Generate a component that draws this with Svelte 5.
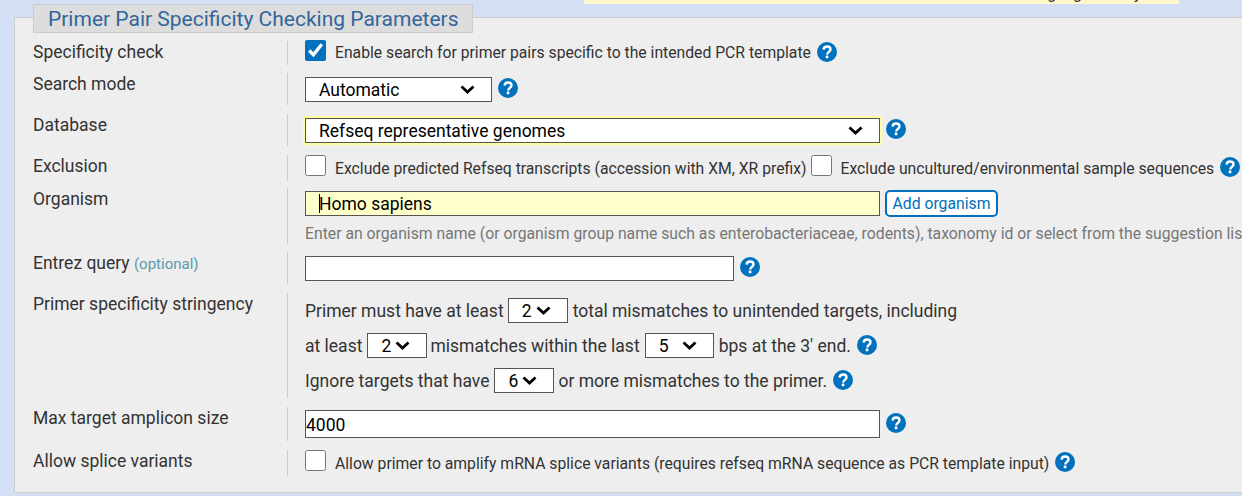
<script>
    let checkSpecificity = $state(true);
    let excludePredicted = $state(false);
    let excludeUncultured = $state(false);
    let allowSplice = $state(false);
    let searchMode = $state("Automatic");
    let database = $state("Refseq representative genomes");
    let organism = $state("Homo sapiens");
    let entrez = $state("");
    let maxSize = $state("4000");
    let totalMis = $state("2");
    let lastMis = $state("2");
    let lastBps = $state("5");
    let ignoreMis = $state("6");
</script>

{#snippet help()}
    <svg class="help" viewBox="0 0 20 20" aria-hidden="true">
        <circle cx="10" cy="10" r="10" fill="#0071bc" />
        <path d="M6.6 7.6c.1-2 1.5-3.1 3.5-3.1 2 0 3.4 1.1 3.4 2.8 0 1.3-.7 2-1.7 2.7-.9.6-1.4 1-1.4 2v.4" fill="none" stroke="#fff" stroke-width="2.4" />
        <rect x="8.7" y="13.5" width="2.7" height="2.7" rx=".4" fill="#fff" />
    </svg>
{/snippet}

<div class="page">
    <div class="notice"><span>Note: Parameter values that differ from the default are highlighted in yellow</span></div>

    <fieldset class="panel">
        <legend>Primer Pair Specificity Checking Parameters</legend>

        <div class="row r1">
            <div class="label">Specificity check</div>
            <div class="field">
                <label class="small"><input type="checkbox" bind:checked={checkSpecificity} /> Enable search for primer pairs specific to the intended PCR template</label>
                {@render help()}
            </div>
        </div>

        <div class="row r2">
            <div class="label">Search mode</div>
            <div class="field">
                <select class="mode" bind:value={searchMode}>
                    <option>Automatic</option>
                    <option>User guided</option>
                </select>
                {@render help()}
            </div>
        </div>

        <div class="row r3">
            <div class="label">Database</div>
            <div class="field">
                <select class="wide changed" bind:value={database}>
                    <option>Refseq representative genomes</option>
                    <option>Refseq mRNA</option>
                    <option>nr</option>
                </select>
                {@render help()}
            </div>
        </div>

        <div class="row r4">
            <div class="label">Exclusion</div>
            <div class="field nowrap">
                <label class="small"><input type="checkbox" bind:checked={excludePredicted} /> Exclude predicted Refseq transcripts (accession with XM, XR prefix)</label>
                <label class="small second"><input type="checkbox" bind:checked={excludeUncultured} /> Exclude uncultured/environmental sample sequences</label>
                {@render help()}
            </div>
        </div>

        <div class="row r5">
            <div class="label">Organism</div>
            <div class="field column">
                <div class="line org-line">
                    <div class="caret-wrap">
                        <input class="wide text org" bind:value={organism} />
                        <span class="caret"></span>
                    </div>
                    <button class="add">Add organism</button>
                </div>
                <div class="hint">Enter an organism name (or organism group name such as enterobacteriaceae, rodents), taxonomy id or select from the suggestion list as you type.</div>
            </div>
        </div>

        <div class="row r6">
            <div class="label">Entrez query <span class="opt">(optional)</span></div>
            <div class="field">
                <input class="text entrez" bind:value={entrez} />
                {@render help()}
            </div>
        </div>

        <div class="row r7">
            <div class="label">Primer specificity stringency</div>
            <div class="field column tight">
                <div class="line sentence">
                    Primer must have at least
                    <select class="num first" bind:value={totalMis}><option>1</option><option>2</option><option>3</option></select>
                    total mismatches to unintended targets, including
                </div>
                <div class="line sentence">
                    at least
                    <select class="num nudge" bind:value={lastMis}><option>1</option><option>2</option><option>3</option></select>
                    mismatches within the last
                    <select class="num bps" bind:value={lastBps}><option>5</option><option>10</option></select>
                    bps at the 3' end.
                    {@render help()}
                </div>
                <div class="line sentence">
                    Ignore targets that have
                    <select class="num third" bind:value={ignoreMis}><option>6</option><option>7</option></select>
                    or more mismatches to the primer.
                    {@render help()}
                </div>
            </div>
        </div>

        <div class="row r8">
            <div class="label">Max target amplicon size</div>
            <div class="field">
                <input class="wide text size" bind:value={maxSize} />
                {@render help()}
            </div>
        </div>

        <div class="row r9">
            <div class="label">Allow splice variants</div>
            <div class="field">
                <label class="small"><input type="checkbox" bind:checked={allowSplice} /> Allow primer to amplify mRNA splice variants (requires refseq mRNA sequence as PCR template input)</label>
                {@render help()}
            </div>
        </div>
    </fieldset>
</div>

<style>
:global(body){
    margin:0;
    background:#d2dff5;
    overflow:hidden;
}

.page{
    width:1242px;
    height:496px;
    overflow:hidden;
    font-family:Roboto,"Liberation Sans",sans-serif;
    color:#333;
}

.notice{
    margin-left:584px;
    width:595px;
    height:4px;
    background:#fff8cc;
    overflow:hidden;
    display:flex;
    align-items:flex-end;
    justify-content:flex-end;
    font-size:16px;
    line-height:20px;
    white-space:nowrap;
}

.panel{
    position:relative;
    box-sizing:border-box;
    margin:13px 0 0 14px;
    width:1240px;
    height:476px;
    padding:0;
    border:1px solid #ccc;
    border-right:none;
    background:#eee;
    min-width:0;
}

legend{
    position:absolute;
    left:18px;
    top:-14px;
    box-sizing:border-box;
    width:440px;
    height:29px;
    padding:0 14px;
    background:#ddd;
    border:1px solid #ccc;
    color:#336699;
    font-size:21px;
    line-height:29px;
    white-space:nowrap;
}

.row{
    display:grid;
    grid-template-columns:272px 1fr;
    font-size:17.5px;
}

.r1{margin-top:23px;height:24px;}
.r2{margin-top:8px;height:32px;}
.r3{margin-top:9px;height:32px;}
.r4{margin-top:9px;height:24px;}
.r5{margin-top:9px;height:56px;}
.r6{margin-top:8px;height:32px;}
.r7{margin-top:9px;height:104px;}
.r8{margin-top:10px;height:34px;}
.r9{margin-top:9px;height:24px;}

.label{
    padding-left:18px;
    line-height:22px;
    color:#333;
    white-space:nowrap;
}

.opt{
    font-size:15px;
    color:#5b9aa9;
}

.field{
    display:flex;
    align-items:center;
    gap:6px;
    border-left:1px solid #ccc;
    padding-left:17px;
    min-width:0;
    white-space:nowrap;
}

.field.column{
    flex-direction:column;
    align-items:flex-start;
    gap:0;
}

.line{
    display:flex;
    align-items:center;
    gap:4px;
    white-space:nowrap;
}

.sentence{
    height:35px;
}

.sentence .help{
    margin-left:2px;
}

.org-line{
    margin-top:2px;
    gap:5px;
}

.small{
    display:inline-flex;
    align-items:flex-start;
    gap:9px;
    font-size:15.72px;
    line-height:24px;
    padding-top:2px;
}

.r1 .small{
    padding-top:0;
}

.second{
    margin-left:-2px;
}

input[type="checkbox"]{
    flex:none;
    width:21px;
    height:21px;
    margin:-2px 0 0;
    accent-color:#0071bc;
}

.r1 input[type="checkbox"]{
    margin-top:-1px;
}

select,
.text{
    box-sizing:border-box;
    height:25px;
    border:1px solid #555;
    border-radius:0;
    background-color:#fff;
    font-family:Roboto,"Liberation Sans",sans-serif;
    font-size:17.5px;
    color:#000;
}

select{
    appearance:none;
    padding-left:13px;
    background-image:url("data:image/svg+xml,%3Csvg xmlns='http://www.w3.org/2000/svg' width='15' height='9' viewBox='0 0 15 9'%3E%3Cpath d='M1.5 1.5l6 5.5 6-5.5' fill='none' stroke='%23000' stroke-width='2.8'/%3E%3C/svg%3E");
    background-repeat:no-repeat;
    background-position:right 16px center;
}

.mode{width:187px;padding-top:2px;}
.wide{width:575px;}
.changed{box-shadow:0 0 0 2px #ffff99;padding-top:2px;}
.org{background:#ffffcc;padding-left:13px;}
.size{height:28px;padding:2px 0 0;}
.entrez{width:429px;}
.num{width:60px;}
.first{margin-right:1px;}
.nudge{margin-left:1px;margin-right:-1px;}
.third{margin-left:1px;}
.bps{width:69px;margin:0 1px;}

.help{
    flex:none;
    width:20px;
    height:20px;
    margin-top:-2px;
}

.caret-wrap{
    position:relative;
    display:flex;
}

.caret{
    position:absolute;
    left:14px;
    top:3px;
    width:1px;
    height:19px;
    background:#000;
}

.add{
    box-sizing:border-box;
    height:27px;
    width:113px;
    padding:0;
    border:2px solid #0071bc;
    border-radius:5px;
    background:#fff;
    color:#0071bc;
    font-family:Roboto,"Liberation Sans",sans-serif;
    font-size:15.75px;
}

.hint{
    margin-top:7px;
    font-size:15.75px;
    color:#767676;
}
</style>
